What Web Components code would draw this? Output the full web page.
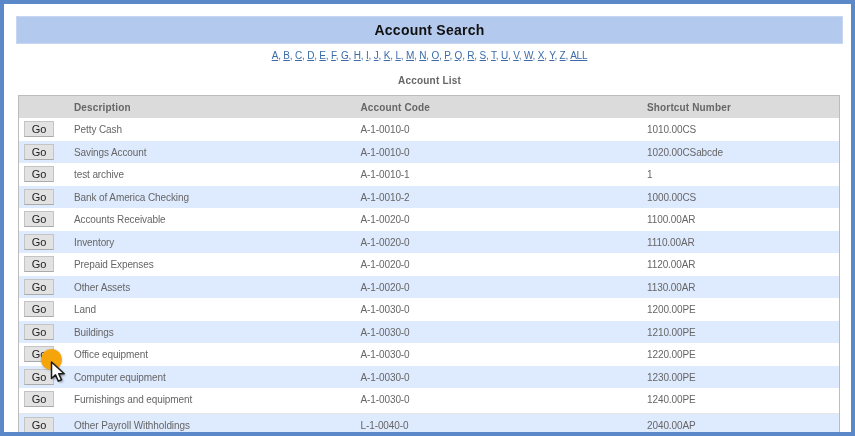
<!DOCTYPE html>
<html><head><meta charset="utf-8"><style>
html,body{margin:0;padding:0;height:100%;overflow:hidden;background:#fff}
</style></head><body>
<search-frame>
  <title-bar>Account Search</title-bar>
  <letter-nav></letter-nav>
  <list-caption>Account List</list-caption>
  <account-table></account-table>
  <click-cursor></click-cursor>
</search-frame>
<script>
function def(name, css, html, init){
  customElements.define(name, class extends HTMLElement{
    constructor(){super();this.attachShadow({mode:'open'}).innerHTML='<style>'+css+'</style>'+html;}
    connectedCallback(){ if(init) init(this); }
  });
}
def('search-frame',`:host{display:block;box-sizing:border-box;width:855px;height:436px;overflow:hidden;position:relative;border:solid #5b88c9;border-width:4px;background:#fff;font-family:"Liberation Sans",Arial,sans-serif;padding:12px 8px 0 12px;color:#666}`,'<slot></slot>');
def('title-bar',`:host{display:block;height:28px;box-sizing:border-box;background:#b3c9ee;border:1px solid #c7d7f2;text-align:center;font:bold 14px/27px "Liberation Sans",Arial,sans-serif;color:#111;letter-spacing:.25px;filter:blur(.25px)}`,'<slot></slot>');
def('letter-nav',`:host{display:block;text-align:center;font-size:10px;line-height:12px;margin-top:6px;color:#4a6fa5;letter-spacing:-.2px;filter:blur(.3px)}
a{color:#3c6ba8;text-decoration:underline}`,'<span id="n"></span>',el=>{
  const n=el.shadowRoot.getElementById('n');
  const l=[...'ABCDEFGHIJKLMNOPQRSTUVWXYZ'].concat('ALL');
  n.innerHTML=l.map(c=>'<a href="#">'+c+'</a>').join(', ');
});
def('list-caption',`:host{display:block;text-align:center;font-weight:bold;font-size:10px;letter-spacing:.2px;line-height:12px;margin-top:13px;color:#666;filter:blur(.3px)}`,'<slot></slot>');
def('go-button',`:host{display:block;box-sizing:border-box;width:30px;height:16px;background:#e2e2e2;border:1px solid #c4c4c4;border-bottom-color:#ababab;text-align:center;font:11px/15px "Liberation Sans",Arial,sans-serif;color:#222}`,'<slot></slot>');
def('account-row',`:host{display:grid;grid-template-columns:55px 286.5px 286.5px 1fr;height:22.5px;align-items:center;font-size:10px;letter-spacing:-.1px;color:#666;background:#fff}
:host([alt]){background:#deeafd}
:host([head]){background:#dbdbdb;font-weight:bold;height:22px;letter-spacing:.15px}
.t{padding-top:1px}
.b{padding-left:5px}`,'<div class="b"><slot name="btn"></slot></div><div class="t" id="a"></div><div class="t" id="b"></div><div class="t" id="c"></div>',el=>{
  const r=el.shadowRoot;
  r.getElementById('a').textContent=el.getAttribute('d');
  r.getElementById('b').textContent=el.getAttribute('k');
  r.getElementById('c').textContent=el.getAttribute('s');
});
const rows=[["Petty Cash","A-1-0010-0","1010.00CS"],["Savings Account","A-1-0010-0","1020.00CSabcde"],["test archive","A-1-0010-1","1"],["Bank of America Checking","A-1-0010-2","1000.00CS"],["Accounts Receivable","A-1-0020-0","1100.00AR"],["Inventory","A-1-0020-0","1110.00AR"],["Prepaid Expenses","A-1-0020-0","1120.00AR"],["Other Assets","A-1-0020-0","1130.00AR"],["Land","A-1-0030-0","1200.00PE"],["Buildings","A-1-0030-0","1210.00PE"],["Office equipment","A-1-0030-0","1220.00PE"],["Computer equipment","A-1-0030-0","1230.00PE"],["Furnishings and equipment","A-1-0030-0","1240.00PE"],["Other Payroll Withholdings","L-1-0040-0","2040.00AP"]];
def('account-table',`:host{display:block;margin:8px 3px 0 2px;border:1px solid #bcbcbc;border-bottom:0;background:#fff;filter:blur(.25px)}
.gap{height:2px;background:#fff;border-bottom:1px solid #e6e6e6}`,'<div id="t"></div>',el=>{
  const t=el.shadowRoot.getElementById('t');
  const mk=(d,k,s,alt,head)=>{const r=document.createElement('account-row');r.setAttribute('d',d);r.setAttribute('k',k);r.setAttribute('s',s);if(alt)r.setAttribute('alt','');if(head)r.setAttribute('head','');else{const b=document.createElement('go-button');b.slot='btn';b.textContent='Go';r.appendChild(b);}return r;};
  t.appendChild(mk('Description','Account Code','Shortcut Number',false,true));
  rows.forEach((x,i)=>{ if(i==13){const g=document.createElement('div');g.className='gap';t.appendChild(g);} t.appendChild(mk(x[0],x[1],x[2],i%2==1)); });
});
def('click-cursor',`:host{position:absolute;left:26px;top:341px;width:46px;height:46px;pointer-events:none}
svg{display:block;overflow:visible}`,`<svg width="46" height="46" viewBox="0 0 46 46"><defs><filter id="s" x="-50%" y="-50%" width="200%" height="200%"><feGaussianBlur stdDeviation="1.300"/></filter></defs>
<circle cx="21.500" cy="15" r="10.500" fill="#555" opacity=".35" filter="url(#s)"/>
<circle cx="21.500" cy="14.500" r="10.500" fill="#f5a50a"/>
<path d="M21.500 17v16.500l4-3.600 2.800 6.200 3.200-1.400-2.800-6h5.500z" fill="#111" opacity=".55" filter="url(#s)" transform="translate(1.500 1.500)"/>
<path d="M21.500 17v16.500l4-3.600 2.800 6.200 3.200-1.400-2.800-6h5.500z" fill="#fff" stroke="#1c1c1c" stroke-width="1.500" stroke-linejoin="round"/></svg>`);
</script>
</body></html>
